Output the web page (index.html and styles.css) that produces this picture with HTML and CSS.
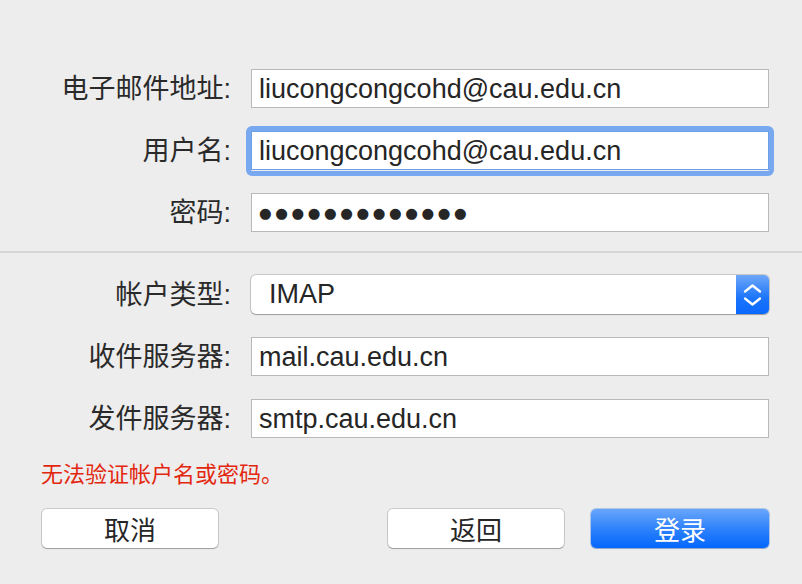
FILE: index.html
```html
<!DOCTYPE html>
<html lang="zh-CN">
<head>
<meta charset="utf-8">
<title>添加帐户</title>
<link rel="stylesheet" href="styles.css">
</head>
<body>
<div class="dialog">
  <div class="form form-account">
    <label class="label">电子邮件地址:</label>
    <div class="field"><span class="value">liucongcongcohd@cau.edu.cn</span></div>
    <label class="label">用户名:</label>
    <div class="field field-focus"><span class="value">liucongcongcohd@cau.edu.cn</span></div>
    <label class="label">密码:</label>
    <div class="field"><span class="dots">●●●●●●●●●●●●●</span></div>
  </div>
  <div class="divider"></div>
  <div class="form form-server">
    <label class="label">帐户类型:</label>
    <div class="popup">
      <span class="popup-value">IMAP</span>
      <span class="popup-arrows">
        <svg width="33" height="39" viewBox="0 0 33 39" aria-hidden="true">
          <path d="M9 16.5 L16.5 10.5 L24 16.5" fill="none" stroke="#fff" stroke-width="2.3" stroke-linecap="round" stroke-linejoin="round"/>
          <path d="M9 23.5 L16.5 29.5 L24 23.5" fill="none" stroke="#fff" stroke-width="2.3" stroke-linecap="round" stroke-linejoin="round"/>
        </svg>
      </span>
    </div>
    <label class="label">收件服务器:</label>
    <div class="field"><span class="value">mail.cau.edu.cn</span></div>
    <label class="label">发件服务器:</label>
    <div class="field"><span class="value">smtp.cau.edu.cn</span></div>
  </div>
  <p class="error">无法验证帐户名或密码。</p>
  <div class="buttons">
    <button class="btn">取消</button>
    <span class="spacer"></span>
    <button class="btn">返回</button>
    <button class="btn btn-primary">登录</button>
  </div>
</div>
</body>
</html>
```
FILE: styles.css
```css
html, body {
  margin: 0;
  padding: 0;
}
body {
  background: #ededed;
  width: 802px;
  height: 584px;
  overflow: hidden;
  font-family: "Liberation Sans", "Noto Sans CJK SC", sans-serif;
  color: #262626;
}
.dialog {
  padding-top: 69px;
}
.form {
  display: grid;
  grid-template-columns: 231px 518px;
  grid-auto-rows: 39px;
  column-gap: 20px;
  row-gap: 23px;
  align-items: center;
}
.label {
  text-align: right;
  font-size: 27px;
  line-height: 30px;
  color: #2a2a2a;
  margin-top: 1px;
}
.field {
  position: relative;
  box-sizing: border-box;
  height: 39px;
  background: #fff;
  border: 1px solid #b9b9b9;
  display: flex;
  align-items: center;
  padding-left: 7px;
}
.value {
  font-size: 27px;
  color: #262626;
  white-space: nowrap;
  margin-top: 1px;
}
.field-focus {
  border-color: #6d9fe6;
}
.field-focus::before {
  content: "";
  position: absolute;
  left: -6px;
  top: -6px;
  right: -6px;
  bottom: -7px;
  border: 5px solid #78a8ef;
  border-radius: 6px;
  pointer-events: none;
}
.dots {
  font-family: "DejaVu Sans", sans-serif;
  font-size: 14.5px;
  letter-spacing: 3.6px;
  color: #262626;
}
.divider {
  height: 2px;
  background: #d5d5d5;
  margin: 19px 0 22px;
}
.popup {
  height: 39px;
  display: flex;
  border-radius: 5px;
  overflow: hidden;
  background: #fff;
  box-shadow: 0 0 0 1px rgba(0,0,0,0.16), 0 1px 1px rgba(0,0,0,0.22);
}
.popup-value {
  flex: 1;
  display: flex;
  align-items: center;
  padding-left: 18px;
  font-size: 27px;
  color: #262626;
}
.popup-arrows {
  width: 33px;
  height: 39px;
  background: linear-gradient(#6ea7f8, #1a74fb 60%, #0a68fd);
  display: block;
}
.popup-arrows svg {
  display: block;
}
.error {
  margin: 21px 0 0 41px;
  font-size: 22px;
  line-height: 26px;
  color: #e3270f;
  font-family: "Noto Sans CJK SC", sans-serif;
}
.buttons {
  display: flex;
  margin-top: 24px;
  padding: 0 33px 0 42px;
}
.spacer {
  flex: 1;
}
.btn {
  width: 176px;
  height: 39px;
  margin: 0;
  padding: 0;
  border: none;
  border-radius: 5px;
  background: #fff;
  box-shadow: 0 0 0 1px rgba(0,0,0,0.14), 0 1px 1px rgba(0,0,0,0.22);
  font-family: "Noto Sans CJK SC", sans-serif;
  font-size: 26px;
  color: #262626;
  line-height: 39px;
}
.btn-primary {
  width: 178px;
  margin-left: 27px;
  color: #fff;
  background: linear-gradient(#69a6fb, #2a7ffc 55%, #0367fd);
  box-shadow: 0 0 0 1px rgba(0,80,220,0.25), 0 1px 1px rgba(0,0,0,0.18);
}
```
